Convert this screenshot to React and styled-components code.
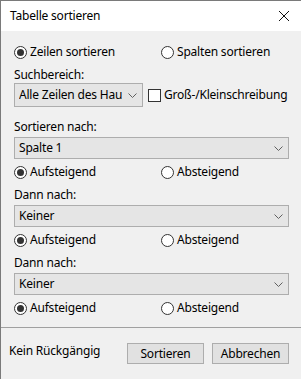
import React from 'react'
import styled, { createGlobalStyle } from 'styled-components'

const GlobalStyle = createGlobalStyle`
  html, body {
    margin: 0;
    padding: 0;
    background: #f0f0f0;
  }
  body {
    font-family: "Noto Sans", "Liberation Sans", sans-serif;
    font-size: 12px;
    letter-spacing: -0.2px;
    color: #000;
  }
`

const Window = styled.div`
  box-sizing: border-box;
  width: 301px;
  height: 379px;
  border-top: 1px solid #7a7a7a;
  border-left: 1px solid #7a7a7a;
  background: #f0f0f0;
  display: flex;
  flex-direction: column;
  overflow: hidden;
`

const TitleBar = styled.div`
  height: 30px;
  background: #fff;
  display: flex;
  align-items: center;
  justify-content: space-between;
  padding: 0 9px 0 9px;
  flex-shrink: 0;
`

const Title = styled.span`
  font-size: 12px;
  line-height: 16px;
`

const Close = styled.svg`
  width: 12px;
  height: 12px;
  margin-right: 2px;
`

const Body = styled.div`
  padding: 13px 12px 0 13px;
  display: flex;
  flex-direction: column;
`

const Label = styled.div`
  height: 16px;
  line-height: 16px;
  margin-top: ${p => p.$top}px;
`

const RadioRow = styled.div`
  display: grid;
  grid-template-columns: 147px auto;
  height: 16px;
  margin-top: ${p => p.$top || 0}px;
`

const Option = styled.label`
  display: flex;
  align-items: center;
  gap: 3px;
  line-height: 16px;
  white-space: nowrap;
`

const Circle = styled.span`
  box-sizing: border-box;
  width: 13px;
  height: 13px;
  border-radius: 50%;
  border: 1px solid #333;
  background: #fff;
  display: flex;
  align-items: center;
  justify-content: center;
  &::after {
    content: "";
    width: 7px;
    height: 7px;
    border-radius: 50%;
    background: ${p => (p.$checked ? '#333' : 'transparent')};
  }
`

const Box = styled.span`
  box-sizing: border-box;
  width: 13px;
  height: 13px;
  border: 1px solid #333;
  background: #fff;
`

const Select = styled.div`
  box-sizing: border-box;
  width: ${p => p.$width}px;
  height: ${p => p.$height || 22}px;
  margin-top: ${p => p.$top || 0}px;
  border: 1px solid #adadad;
  background: #e5e5e5;
  display: flex;
  align-items: center;
  padding: 0 0 0 4px;
  flex-shrink: 0;
`

const SelectText = styled.span`
  flex: 1;
  overflow: hidden;
  white-space: nowrap;
  line-height: 16px;
`

const Chevron = styled.svg`
  width: 9px;
  height: 5px;
  margin: 0 5px 0 6px;
  flex-shrink: 0;
`

const SearchRow = styled.div`
  display: flex;
  align-items: center;
`

const CheckOption = styled(Option)`
  margin-left: 5px;
`

const Separator = styled.div`
  height: 1px;
  background: #a0a0a0;
  margin-top: 11px;
  flex-shrink: 0;
`

const Footer = styled.div`
  display: flex;
  align-items: center;
  padding: 15px 12px 0 8px;
`

const Note = styled.span`
  flex: 1;
  line-height: 16px;
  margin-top: -5px;
`

const Button = styled.button`
  box-sizing: border-box;
  width: 77px;
  height: 21px;
  margin-left: ${p => p.$gap || 0}px;
  border: 1px solid #adadad;
  background: #e1e1e1;
  font: inherit;
  letter-spacing: inherit;
  color: #000;
  padding: 0;
`

function ChevronIcon() {
  return (
    <Chevron viewBox="0 0 9 5">
      <path d="M0.5 0.5 L4.5 4.5 L8.5 0.5" fill="none" stroke="#606060" strokeWidth="1" />
    </Chevron>
  )
}

function Radio({ checked, children }) {
  return (
    <Option>
      <Circle $checked={checked} />
      {children}
    </Option>
  )
}

function Dropdown({ width, height, top, children }) {
  return (
    <Select $width={width} $height={height} $top={top}>
      <SelectText>{children}</SelectText>
      <ChevronIcon />
    </Select>
  )
}

function SortGroup({ label, value, labelTop }) {
  return (
    <>
      <Label $top={labelTop}>{label}</Label>
      <Dropdown width={275} top={2}>{value}</Dropdown>
      <RadioRow $top={5}>
        <Radio checked>Aufsteigend</Radio>
        <Radio>Absteigend</Radio>
      </RadioRow>
    </>
  )
}

export default function App() {
  return (
    <>
      <GlobalStyle />
      <Window>
        <TitleBar>
          <Title>Tabelle sortieren</Title>
          <Close viewBox="0 0 12 12">
            <path d="M1 1 L11 11 M11 1 L1 11" stroke="#111" strokeWidth="1" fill="none" />
          </Close>
        </TitleBar>
        <Body>
          <RadioRow>
            <Radio checked>Zeilen sortieren</Radio>
            <Radio>Spalten sortieren</Radio>
          </RadioRow>
          <Label $top={7}>Suchbereich:</Label>
          <SearchRow>
            <Dropdown width={129} height={24}>Alle Zeilen des Haupt</Dropdown>
            <CheckOption>
              <Box />
              Groß-/Kleinschreibung
            </CheckOption>
          </SearchRow>
          <SortGroup label="Sortieren nach:" value="Spalte 1" labelTop={12} />
          <SortGroup label="Dann nach:" value="Keiner" labelTop={7} />
          <SortGroup label="Dann nach:" value="Keiner" labelTop={7} />
        </Body>
        <Separator />
        <Footer>
          <Note>Kein Rückgängig</Note>
          <Button>Sortieren</Button>
          <Button $gap={8}>Abbrechen</Button>
        </Footer>
      </Window>
    </>
  )
}
